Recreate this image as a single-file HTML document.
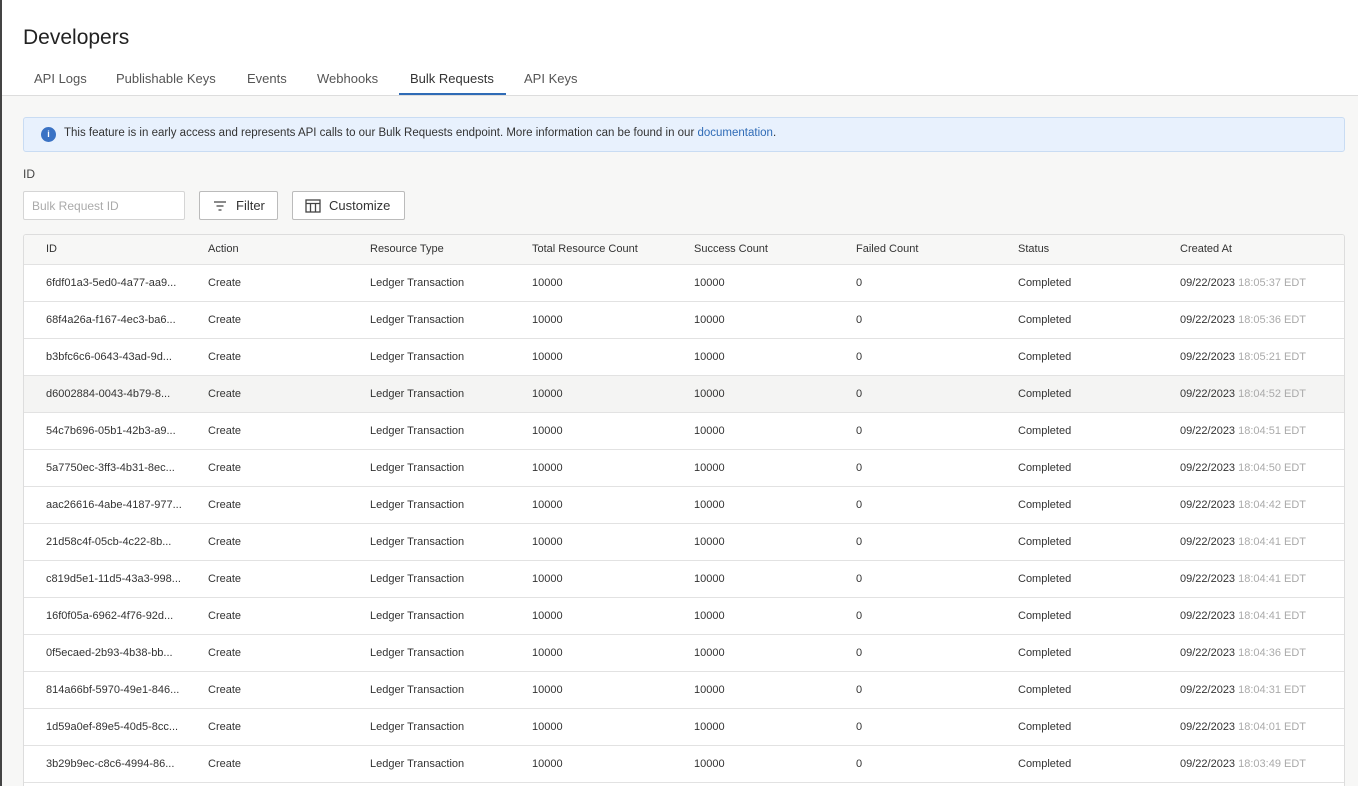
<!DOCTYPE html>
<html><head><meta charset="utf-8"><style>
*{box-sizing:border-box;margin:0;padding:0}
html,body{width:1358px;height:786px;overflow:hidden}
body{background:#f7f7f6;font-family:"Liberation Sans",sans-serif;color:#333;position:relative}
.lb{position:absolute;left:0;top:0;width:2px;height:786px;background:#444;z-index:5}
.top{position:absolute;left:0;top:0;width:1358px;height:96px;background:#fff;border-bottom:1px solid #ddd}
h1{position:absolute;left:23px;top:26px;font-size:21px;font-weight:400;color:#222}
.tab{position:absolute;top:71px;font-size:13px;color:#555}
.ul{position:absolute;left:399px;top:93px;width:107px;height:2px;background:#2f6bb6}
.info{position:absolute;left:23px;top:117px;width:1322px;height:35px;background:#e8f1fd;border:1px solid #c9dcf3;border-radius:3px;font-size:11.5px;color:#333;padding:9px 0 0 40px}
.info i{position:absolute;left:17px;top:9px;width:15px;height:15px;border-radius:50%;background:#3a72c4;color:#fff;font-style:normal;font-size:9px;text-align:center;line-height:15px;font-weight:bold}
.info a{color:#2f6bb6}
.lbl{position:absolute;left:23px;top:167px;font-size:12px;color:#444}
.inp{position:absolute;left:23px;top:191px;width:162px;height:29px;background:#fff;border:1px solid #d5d5d5;border-radius:2px;font-size:12px;color:#aaa;padding:7px 8px}
.btn{position:absolute;top:191px;height:29px;background:#fff;border:1px solid #bbb;border-radius:2px;font-size:13px;color:#333;padding:6px 0 0 36px}
.tbl{position:absolute;left:23px;top:234px;width:1322px;height:560px;background:#fff;border:1px solid #ddd;border-radius:3px;overflow:hidden}
.row{position:absolute;left:0;width:1321px;height:37px;border-bottom:1px solid #e2e2e2;font-size:11px;color:#333}
.row span{position:absolute;top:12px}
.hd{background:#f7f7f6;height:30px;color:#333}
.hd span{top:8px}
.g{color:#aaa}
</style></head><body>
<div class="lb"></div>
<div class="top">
<h1>Developers</h1>
<div class="tab" style="left:34px">API Logs</div>
<div class="tab" style="left:116px">Publishable Keys</div>
<div class="tab" style="left:247px">Events</div>
<div class="tab" style="left:317px">Webhooks</div>
<div class="tab" style="left:410px;color:#333">Bulk Requests</div>
<div class="tab" style="left:524px">API Keys</div>
<div class="ul"></div>
</div>
<div class="info"><i>i</i>This feature is in early access and represents API calls to our Bulk Requests endpoint. More information can be found in our <a>documentation</a>.</div>
<div class="lbl">ID</div>
<div class="inp">Bulk Request ID</div>
<div class="btn" style="left:199px;width:79px"><svg style="position:absolute;left:13px;top:8px" width="14" height="12" viewBox="0 0 14 12" fill="none" stroke="#444" stroke-width="1.3"><path d="M1 2h12M3.5 6h7M5.5 10h3"/></svg>Filter</div>
<div class="btn" style="left:292px;width:113px"><svg style="position:absolute;left:12px;top:7px" width="16" height="14" viewBox="0 0 16 14" fill="none" stroke="#444" stroke-width="1.3"><rect x="1" y="1" width="14" height="12"/><path d="M1 4.5h14M5.5 4.5v8.5M10.5 4.5v8.5"/></svg>Customize</div>
<div class="tbl" id="t">
<div class="row hd" style="top:0"><span style="left:22px">ID</span><span style="left:184px">Action</span><span style="left:346px">Resource Type</span><span style="left:508px">Total Resource Count</span><span style="left:670px">Success Count</span><span style="left:832px">Failed Count</span><span style="left:994px">Status</span><span style="left:1156px">Created At</span></div>
</div>
<script>
var d=[["6fdf01a3-5ed0-4a77-aa9...","18:05:37"],["68f4a26a-f167-4ec3-ba6...","18:05:36"],["b3bfc6c6-0643-43ad-9d...","18:05:21"],["d6002884-0043-4b79-8...","18:04:52"],["54c7b696-05b1-42b3-a9...","18:04:51"],["5a7750ec-3ff3-4b31-8ec...","18:04:50"],["aac26616-4abe-4187-977...","18:04:42"],["21d58c4f-05cb-4c22-8b...","18:04:41"],["c819d5e1-11d5-43a3-998...","18:04:41"],["16f0f05a-6962-4f76-92d...","18:04:41"],["0f5ecaed-2b93-4b38-bb...","18:04:36"],["814a66bf-5970-49e1-846...","18:04:31"],["1d59a0ef-89e5-40d5-8cc...","18:04:01"],["3b29b9ec-c8c6-4994-86...","18:03:49"],["aa11b2c3-1111-4a2b-9c...","18:03:40"]];
var h="";d.forEach(function(r,i){h+='<div class="row" style="top:'+(30+i*37)+'px;'+(i==3?'background:#f4f4f3':'')+'"><span style="left:22px">'+r[0]+'</span><span style="left:184px">Create</span><span style="left:346px">Ledger Transaction</span><span style="left:508px">10000</span><span style="left:670px">10000</span><span style="left:832px">0</span><span style="left:994px">Completed</span><span style="left:1156px">09/22/2023 <b class="g" style="font-weight:400">'+r[1]+' EDT</b></span></div>'});
document.getElementById("t").insertAdjacentHTML("beforeend",h);
</script>
</body></html>
